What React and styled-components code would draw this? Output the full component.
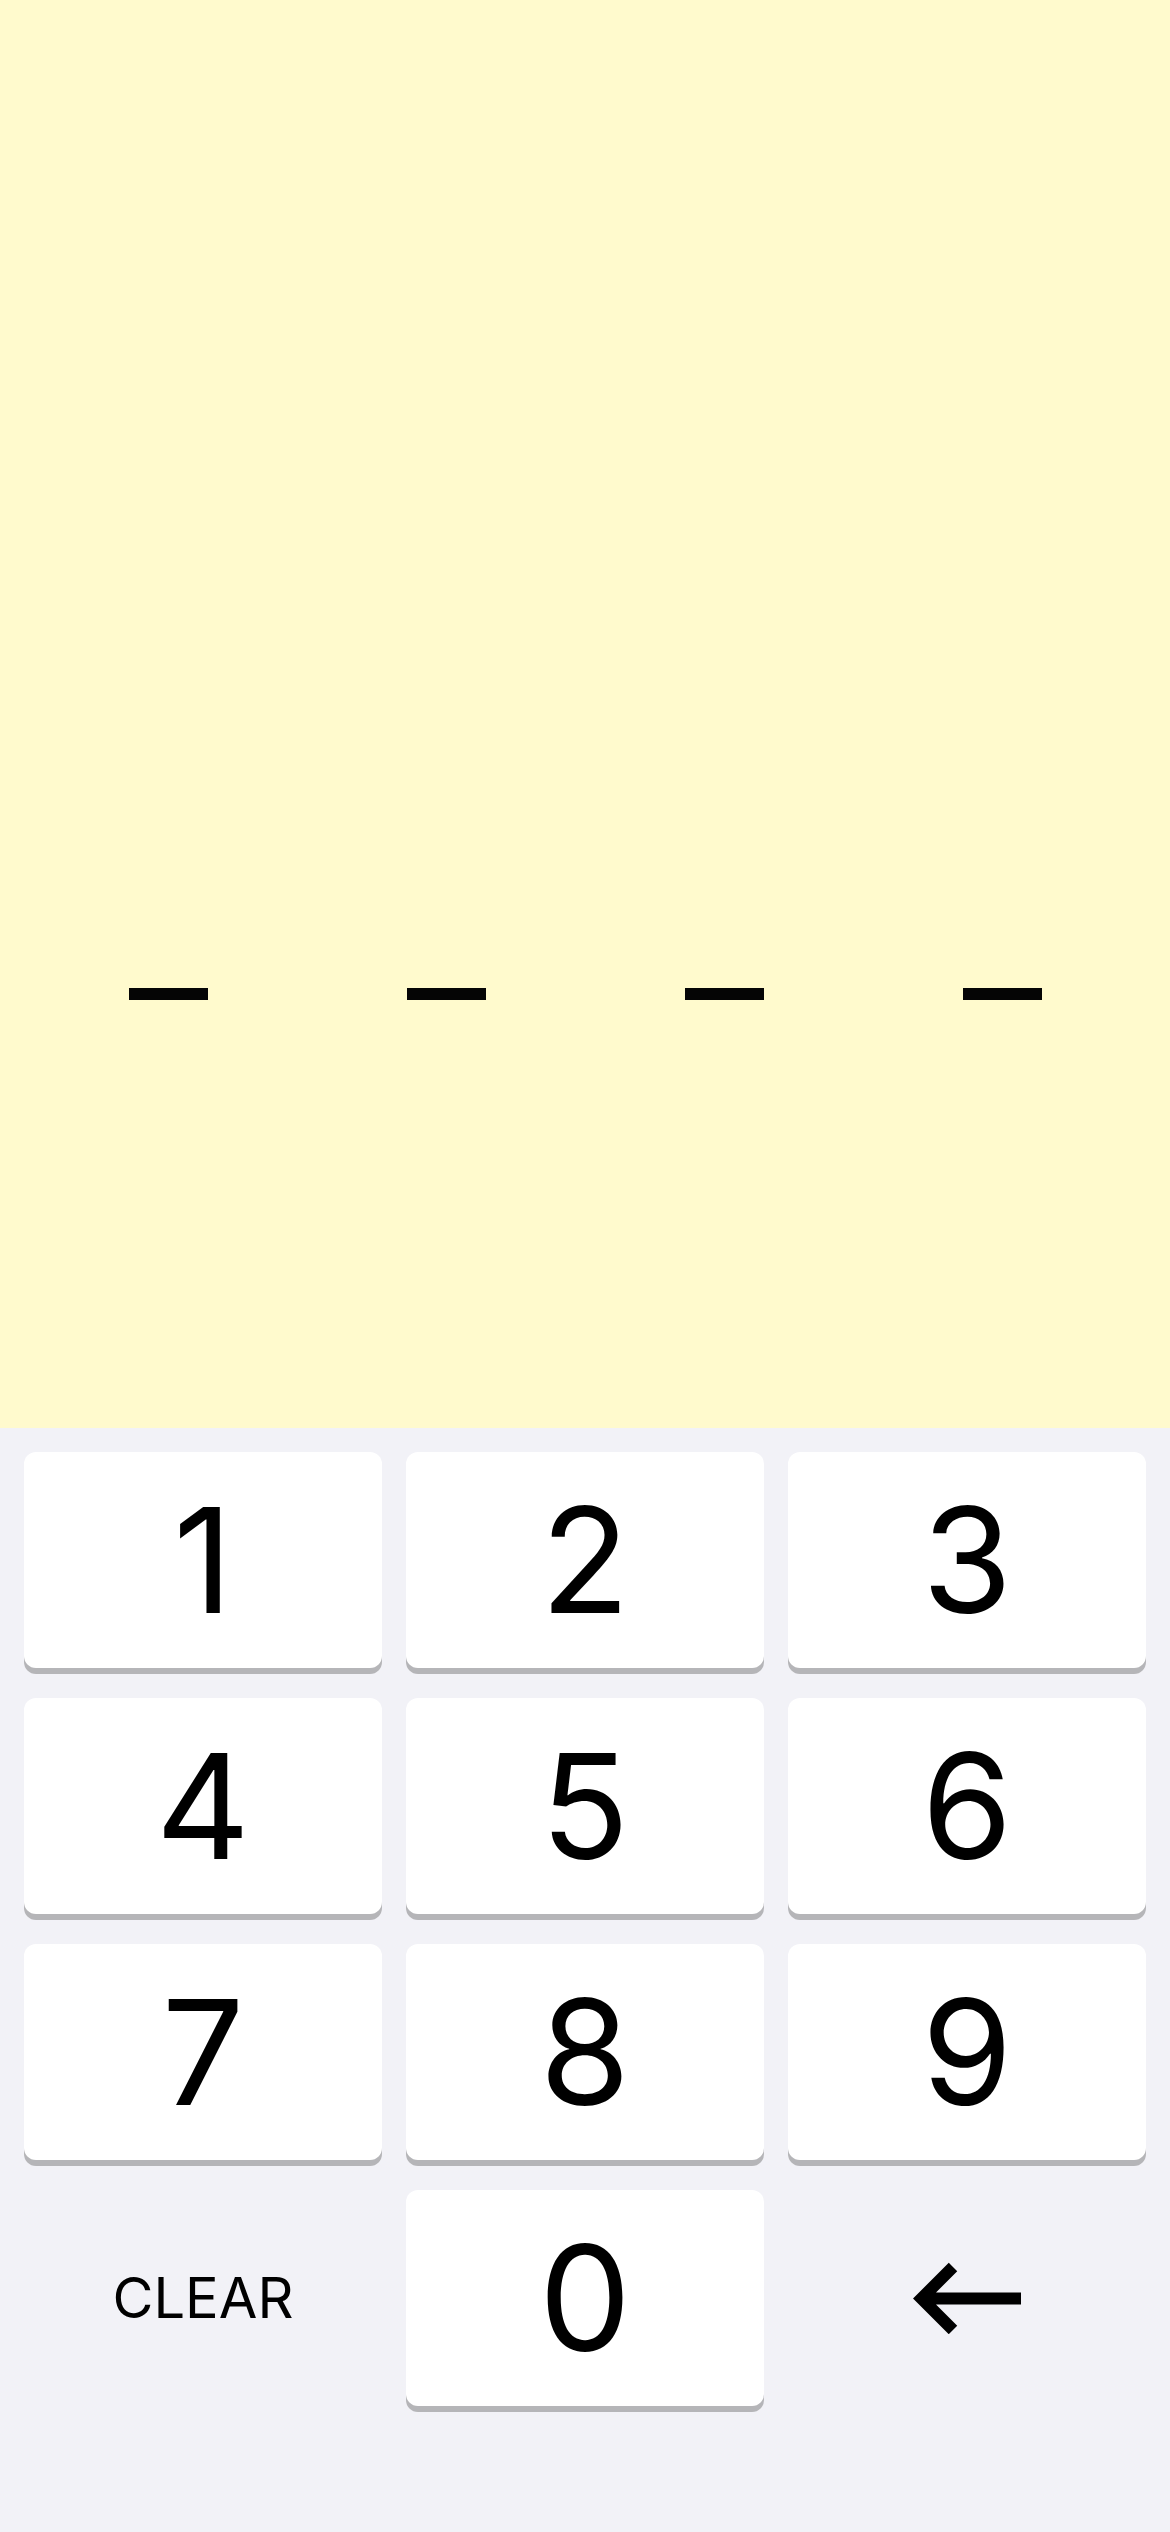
import styled, { createGlobalStyle } from "styled-components";

const GlobalStyle = createGlobalStyle`
  html, body {
    margin: 0;
    padding: 0;
    background: #f2f2f7;
  }
  body {
    font-family: Inter, "Noto Sans", "Liberation Sans", sans-serif;
  }
`;

const Screen = styled.div`
  width: 1170px;
  min-height: 2532px;
  display: flex;
  flex-direction: column;
  background: #f2f2f7;
`;

const Display = styled.div`
  height: 1428px;
  background: #fffacd;
  display: flex;
  justify-content: center;
  align-items: flex-start;
  padding-top: 988px;
  box-sizing: border-box;
  gap: 199px;
`;

const Dash = styled.div`
  width: 79px;
  height: 12px;
  background: #050505;
`;

const Keypad = styled.div`
  display: grid;
  grid-template-columns: repeat(3, 358px);
  grid-auto-rows: 216px;
  column-gap: 24px;
  row-gap: 30px;
  padding: 24px 24px 120px;
`;

const Key = styled.button`
  border: none;
  margin: 0;
  padding: 0;
  border-radius: 12px;
  background: ${(p) => (p.$plain ? "transparent" : "#ffffff")};
  box-shadow: ${(p) => (p.$plain ? "none" : "0 6px 0 #b5b5b8")};
  color: #000;
  font-family: Inter, "Noto Sans", "Liberation Sans", sans-serif;
  font-size: ${(p) => (p.$small ? "56px" : "146px")};
  font-weight: 400;
  line-height: 1;
  display: flex;
  align-items: center;
  justify-content: center;
  cursor: pointer;
`;

const BackArrow = () => (
  <svg width="108" height="72" viewBox="0 0 108 72" fill="none">
    <path
      d="M40 5 L8.5 36.5 L40 68 M8.5 36.5 H108"
      stroke="#000"
      strokeWidth="12"
      strokeLinecap="butt"
      strokeLinejoin="miter"
    />
  </svg>
);

const digits = ["1", "2", "3", "4", "5", "6", "7", "8", "9"];

const App = () => {
  return (
    <Screen>
      <GlobalStyle />
      <Display>
        <Dash />
        <Dash />
        <Dash />
        <Dash />
      </Display>
      <Keypad>
        {digits.map((d) => (
          <Key key={d}>{d}</Key>
        ))}
        <Key $plain $small>CLEAR</Key>
        <Key>0</Key>
        <Key $plain aria-label="Delete">
          <BackArrow />
        </Key>
      </Keypad>
    </Screen>
  );
};

export default App;
